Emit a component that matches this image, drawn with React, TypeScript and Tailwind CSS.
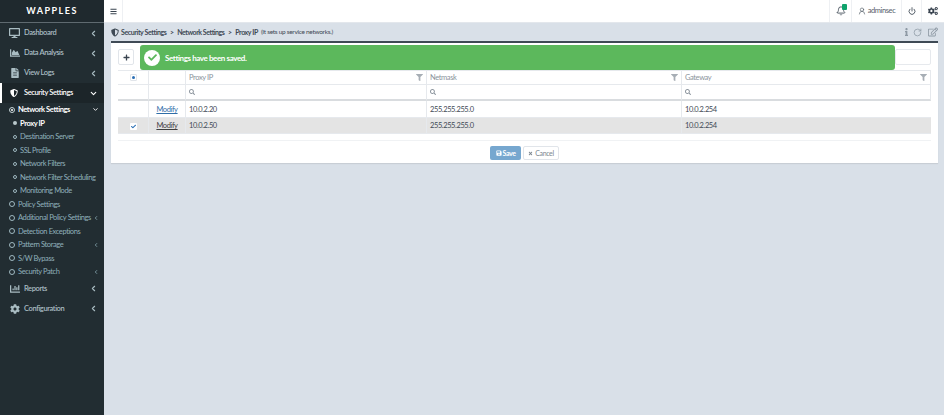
import type { ReactNode } from "react";
import {
  FaBars,
  FaChartArea,
  FaChartBar,
  FaCheck,
  FaCog,
  FaCogs,
  FaDesktop,
  FaFileAlt,
  FaFilter,
  FaInfo,
  FaPlus,
  FaRegEdit,
  FaSave,
  FaSearch,
  FaShieldAlt,
  FaTimes,
} from "react-icons/fa";
import { Bell, ChevronDown, ChevronLeft, Power, RotateCw, UserRound } from "lucide-react";

const topMenus = [
  { label: "Dashboard", icon: <FaDesktop className="h-[10px] w-[11px]" /> },
  { label: "Data Analysis", icon: <FaChartArea className="h-[10px] w-[10px]" /> },
  { label: "View Logs", icon: <FaFileAlt className="h-[10px] w-[8px]" /> },
];

const networkItems = [
  "Destination Server",
  "SSL Profile",
  "Network Filters",
  "Network Filter Scheduling",
  "Monitoring Mode",
];

const securityItems = [
  { label: "Policy Settings" },
  { label: "Additional Policy Settings", more: true },
  { label: "Detection Exceptions" },
  { label: "Pattern Storage", more: true },
  { label: "S/W Bypass" },
  { label: "Security Patch", more: true },
];

function MainMenu({ icon, label }: { icon: ReactNode; label: string }) {
  return (
    <div className="flex h-5 items-center pl-[9px] pr-[6px] text-[7.5px] font-semibold text-[#a9bcc2]">
      <span className="flex w-[11px] justify-center">{icon}</span>
      <span className="ml-[4px] flex-1">{label}</span>
      <ChevronLeft className="h-[9px] w-[9px]" strokeWidth={3} />
    </div>
  );
}

function SubMenu({ label, more }: { label: string; more?: boolean }) {
  return (
    <div className="flex h-[13.5px] items-center pl-[9px] pr-[5px] text-[7.5px] text-[#8fb0ba]">
      <span className="h-[6px] w-[6px] shrink-0 rounded-full border border-[#9fb8c0]" />
      <span className="ml-[3px] flex-1 whitespace-nowrap">{label}</span>
      {more ? <ChevronLeft className="h-[6px] w-[6px]" strokeWidth={3} /> : null}
    </div>
  );
}

function Sidebar() {
  return (
    <aside className="flex w-[104px] shrink-0 flex-col bg-[#222d32]">
      <div className="flex h-[23px] items-center justify-center border-b border-[#5f6a70] bg-[#1f292e] text-[9px] font-bold tracking-[1.5px] text-white">
        WAPPLES
      </div>
      {topMenus.map((m) => (
        <MainMenu key={m.label} icon={m.icon} label={m.label} />
      ))}
      <div className="flex h-5 items-center border-l-2 border-white bg-[#1c2529] pl-[8px] pr-[6px] text-[7.5px] font-semibold text-white">
        <span className="flex w-[8px] justify-center">
          <FaShieldAlt className="h-[10px] w-[8px]" />
        </span>
        <span className="ml-[6px] flex-1 whitespace-nowrap">Security Settings</span>
        <ChevronDown className="h-[9px] w-[9px]" strokeWidth={3} />
      </div>
      <div className="flex h-[13.5px] items-center pl-[9px] pr-[5px] text-[7.5px] font-bold text-white">
        <span className="flex h-[6px] w-[6px] shrink-0 items-center justify-center rounded-full border border-[#c6d4d8]">
          <span className="h-[2px] w-[2px] rounded-full bg-white" />
        </span>
        <span className="ml-[3px] flex-1 whitespace-nowrap">Network Settings</span>
        <ChevronDown className="h-[7px] w-[7px]" strokeWidth={3} />
      </div>
      <div className="flex h-[13.5px] items-center pl-[13px] text-[7.5px] font-bold text-white">
        <span className="h-[4px] w-[4px] rounded-full bg-[#b9c8cc]" />
        <span className="ml-[3px]">Proxy IP</span>
      </div>
      {networkItems.map((label) => (
        <div key={label} className="flex h-[13.5px] items-center pl-[13px] text-[7.5px] text-[#8fb0ba]">
          <span className="h-[4px] w-[4px] shrink-0 rounded-full border border-[#9fb8c0]" />
          <span className="ml-[3px] whitespace-nowrap">{label}</span>
        </div>
      ))}
      {securityItems.map((s) => (
        <SubMenu key={s.label} label={s.label} more={s.more} />
      ))}
      <MainMenu icon={<FaChartBar className="h-[10px] w-[10px]" />} label="Reports" />
      <MainMenu icon={<FaCog className="h-[10px] w-[10px]" />} label="Configuration" />
    </aside>
  );
}

function TopBar() {
  return (
    <header className="flex h-[23px] items-center border-b border-[#e3e7ec] bg-white text-[#3a4450]">
      <div className="flex h-full w-[19px] items-center justify-center border-r border-[#eef0f3]">
        <FaBars className="h-[7px] w-[7px]" />
      </div>
      <div className="flex-1" />
      <div className="relative flex h-full w-[23px] items-center justify-center border-x border-[#eef0f3]">
        <Bell className="h-[10px] w-[10px]" strokeWidth={2} />
        <span className="absolute right-[4px] top-[4px] h-[6px] w-[5px] rounded-[1px] bg-[#0fa36b]" />
      </div>
      <div className="flex h-full w-[50px] items-center justify-center gap-[2px] border-r border-[#eef0f3] text-[7.5px] text-[#56606a]">
        <UserRound className="h-[8px] w-[8px]" />
        adminsec
      </div>
      <div className="flex h-full w-[20px] items-center justify-center border-r border-[#eef0f3]">
        <Power className="h-[8px] w-[8px]" strokeWidth={2.5} />
      </div>
      <div className="flex h-full w-[22px] items-center justify-center">
        <FaCogs className="h-[10px] w-[10px]" />
      </div>
    </header>
  );
}

function Breadcrumb() {
  return (
    <div className="flex h-[18px] items-center text-[7px] text-[#3f4a55]">
      <FaShieldAlt className="h-[9px] w-[8px]" />
      <span className="ml-[2px] font-bold">Security Settings</span>
      <span className="mx-[3.5px] font-bold">&gt;</span>
      <span className="font-bold tracking-[-0.45px]">Network Settings</span>
      <span className="mx-[3.5px] font-bold">&gt;</span>
      <span className="font-bold">Proxy IP</span>
      <span className="ml-[3px] text-[6.5px] tracking-[-0.3px]">(It sets up service networks.)</span>
      <div className="ml-auto flex items-center text-[#8e99a4]">
        <FaInfo className="h-[8px] w-[5px]" />
        <RotateCw className="ml-[4px] h-[9px] w-[9px]" />
        <FaRegEdit className="ml-[6px] h-[10px] w-[10px]" />
      </div>
    </div>
  );
}

const headers = ["Proxy IP", "Netmask", "Gateway"];
const rows = [
  { ip: "10.0.2.20", checked: false, height: "h-[17px]" },
  { ip: "10.0.2.50", checked: true, height: "h-[16px]" },
];

function DataTable() {
  return (
    <div className="grid grid-cols-[31px_37px_241px_255px_249px] border-b border-[#f0f2f4] pb-[6px] text-[7.5px] text-[#3f4a55]">
      <div className="flex h-[15px] items-center justify-center border-y border-r border-[#e6e9ed]">
        <span className="flex h-[7px] w-[7px] items-center justify-center rounded-[1px] border border-[#e1e5ea]">
          <span className="h-[3px] w-[3px] rounded-full bg-[#2a6fb5]" />
        </span>
      </div>
      <div className="border-y border-r border-[#e6e9ed]" />
      {headers.map((h) => (
        <div
          key={h}
          className="flex h-[15px] items-center justify-between border-y border-r border-[#e6e9ed] pl-[3px] pr-[3px] text-[#8a939c] last:border-r-0"
        >
          {h}
          <FaFilter className="h-[7px] w-[7px] text-[#a7aeb5]" />
        </div>
      ))}
      <div className="h-[16px] border-b-2 border-r border-b-[#d9dcdf] border-r-[#e6e9ed]" />
      <div className="border-b-2 border-r border-b-[#d9dcdf] border-r-[#e6e9ed]" />
      {headers.map((h) => (
        <div
          key={h}
          className="flex h-[16px] items-center border-b-2 border-r border-b-[#d9dcdf] border-r-[#e6e9ed] pl-[3px] last:border-r-0"
        >
          <FaSearch className="h-[6px] w-[6px] text-[#8a939c]" />
        </div>
      ))}
      {rows.map((r) => {
        const cell = `flex ${r.height} items-center border-b border-r border-[#e6e9ed] pt-[1px] ${r.checked ? "bg-[#e4e4e4]" : "bg-white"}`;
        return (
          <div key={r.ip} className="contents">
            <div className={`${cell} justify-center`}>
              {r.checked ? (
                <span className="flex h-[7px] w-[7px] items-center justify-center rounded-[1px] bg-white">
                  <FaCheck className="h-[5px] w-[5px] text-[#2a6fb5]" />
                </span>
              ) : null}
            </div>
            <div className={`${cell} justify-center underline ${r.checked ? "text-[#3f3f3f]" : "text-[#2f6ea8]"}`}>
              Modify
            </div>
            <div className={`${cell} pl-[3px]`}>{r.ip}</div>
            <div className={`${cell} pl-[3px]`}>255.255.255.0</div>
            <div className={`${cell} pl-[3px] border-r-0`}>10.0.2.254</div>
          </div>
        );
      })}
    </div>
  );
}

export default function App() {
  return (
    <div className="flex h-[415px] w-[944px] overflow-hidden bg-[#d9e0e8] font-['Lato','Open_Sans',sans-serif] tracking-[-0.4px]">
      <Sidebar />
      <main className="flex min-w-0 flex-1 flex-col">
        <TopBar />
        <div className="pl-[7px] pr-[6px]">
          <Breadcrumb />
          <section className="relative h-[122px] border-t-2 border-[#3f4a55] bg-white px-[7px] pt-[6px] shadow-[0_1px_1px_rgba(0,0,0,0.08)]">
            <div className="flex h-[21px] items-start justify-between">
              <button className="flex h-[16px] w-[16px] items-center justify-center rounded-[2px] border border-[#e1e5ea] text-[#3a4450]">
                <FaPlus className="h-[7px] w-[7px]" />
              </button>
              <div className="h-[16px] w-[36px] rounded-[2px] border border-[#e6e9ed]" />
            </div>
            <div className="absolute left-[29px] top-[2px] flex h-[25px] w-[755px] items-center rounded-[3px] bg-[#5cb85c] pl-[4px] text-[8px] font-bold text-white">
              <span className="flex h-[16px] w-[16px] items-center justify-center rounded-full bg-white">
                <FaCheck className="h-[9px] w-[9px] text-[#5cb85c]" />
              </span>
              <span className="ml-[5px]">Settings have been saved.</span>
            </div>
            <DataTable />
            <div className="mt-[5px] flex items-center justify-center gap-[2px] text-[7px]">
              <button className="flex h-[14px] w-[31px] items-center justify-center gap-[1px] rounded-[2px] bg-[#76a7cf] font-bold text-white">
                <FaSave className="h-[6px] w-[6px]" />
                Save
              </button>
              <button className="flex h-[14px] w-[36px] items-center justify-center gap-[2px] rounded-[2px] border border-[#e1e5ea] text-[#7d8790]">
                <FaTimes className="h-[5px] w-[5px]" />
                Cancel
              </button>
            </div>
          </section>
        </div>
      </main>
    </div>
  );
}
